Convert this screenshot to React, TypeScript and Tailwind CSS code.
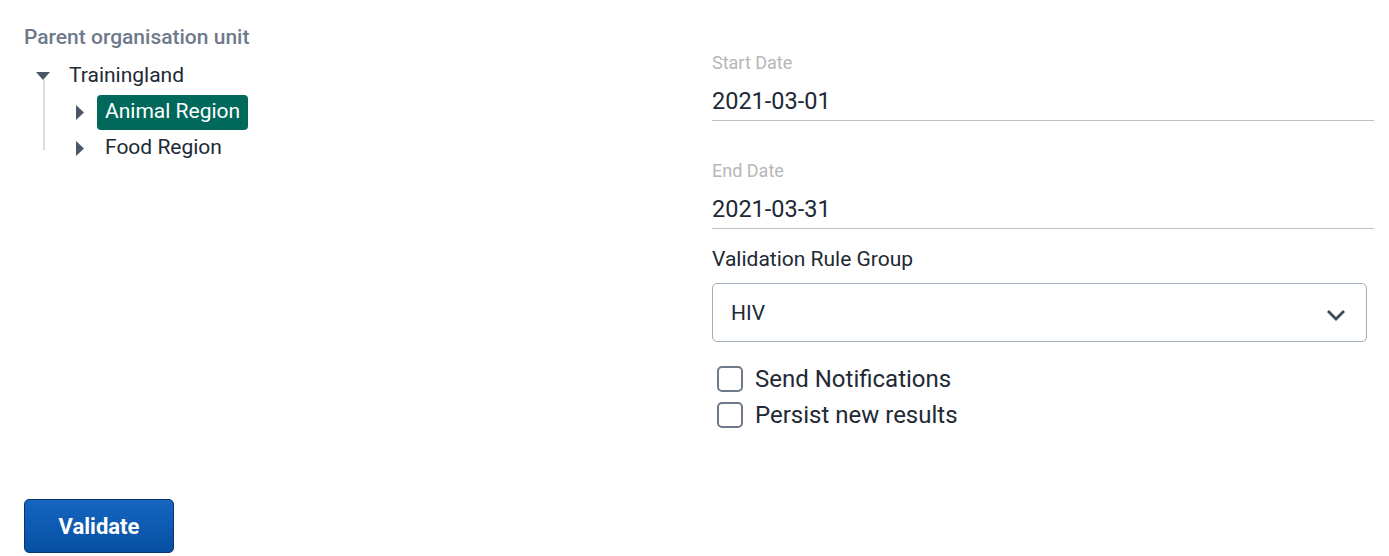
import React from "react";

const font = { fontFamily: "Roboto, 'Noto Sans', sans-serif" };

function CaretDown() {
  return (
    <svg width="14" height="8" viewBox="0 0 14 8" className="block">
      <path d="M0 0 L14 0 L7 8 Z" fill="#4a5768" />
    </svg>
  );
}
function CaretRight() {
  return (
    <svg width="8" height="15" viewBox="0 0 8 15" className="block">
      <path d="M0 0 L8 7.5 L0 15 Z" fill="#4a5768" />
    </svg>
  );
}

function Checkbox({ label }: { label: string }) {
  return (
    <label className="flex h-[36px] items-center pl-[5px]">
      <span className="box-border h-[26px] w-[26px] rounded-[5px] border-[2.5px] border-[#6e7a8a] bg-white" />
      <span className="ml-[12px] text-[24px] leading-[36px] text-[#212934]">{label}</span>
    </label>
  );
}

function DateField({ label, value }: { label: string; value: string }) {
  return (
    <div>
      <div className="h-[24px] text-[18px] leading-[24px] text-[#b5b7ba]">{label}</div>
      <div className="mt-[8px] box-border flex h-[38px] items-center border-b border-[#c2c2c2] pt-[1px] text-[23.5px] text-[#212934]">
        {value}
      </div>
    </div>
  );
}

export default function App() {
  return (
    <div className="min-h-[556px] bg-white" style={font}>
      <div className="flex pl-[24px] pt-[25px]">
        <div className="w-[688px] shrink-0">
          <div className="h-[24px] text-[21px] font-medium leading-[24px] text-[#6e7a8a]">
            Parent organisation unit
          </div>
          <div className="relative mt-[9px]">
            <div className="absolute left-[19px] top-[22px] h-[70px] w-[2px] bg-[#d5dde5]" />
            <div className="flex h-[36px] items-center">
              <div className="flex w-[38px] justify-center">
                <CaretDown />
              </div>
              <span className="ml-[7px] text-[21px] text-[#212934]">Trainingland</span>
            </div>
            <div className="flex h-[36px] items-center pl-[52px]">
              <CaretRight />
              <span className="ml-[13px] flex h-[35px] items-center rounded-[4px] bg-[#00695c] px-[8px] text-[21px] text-white">
                Animal Region
              </span>
            </div>
            <div className="flex h-[36px] items-center pl-[52px]">
              <CaretRight />
              <span className="ml-[13px] px-[8px] text-[21px] text-[#212934]">Food Region</span>
            </div>
          </div>
        </div>
        <div className="flex-1 pr-[15px] pt-[26px]">
          <DateField label="Start Date" value="2021-03-01" />
          <div className="mt-[38px]">
            <DateField label="End Date" value="2021-03-31" />
          </div>
          <div className="mt-[18px] h-[24px] text-[21px] leading-[24px] text-[#212934]">
            Validation Rule Group
          </div>
          <div className="mr-[7px] mt-[12px] box-border flex h-[59px] items-center justify-between rounded-[5px] border border-[#a0adba] bg-white pl-[18px] pr-[20px]">
            <span className="pt-[2px] text-[21px] text-[#212934]">HIV</span>
            <svg width="20" height="12" viewBox="0 0 20 12" className="mt-[4px]">
              <path d="M2 2 L10 10 L18 2" fill="none" stroke="#404b5a" strokeWidth="2.8" />
            </svg>
          </div>
          <div className="mt-[19px]">
            <Checkbox label="Send Notifications" />
            <Checkbox label="Persist new results" />
          </div>
        </div>
      </div>
      <div className="pl-[24px] pt-[66px]">
        <button className="box-border flex h-[54px] w-[150px] items-center justify-center rounded-[5px] border border-[#093371] bg-gradient-to-b from-[#1565c0] to-[#0650a3] pt-[1px] text-[22px] font-bold text-white">
          Validate
        </button>
      </div>
    </div>
  );
}
